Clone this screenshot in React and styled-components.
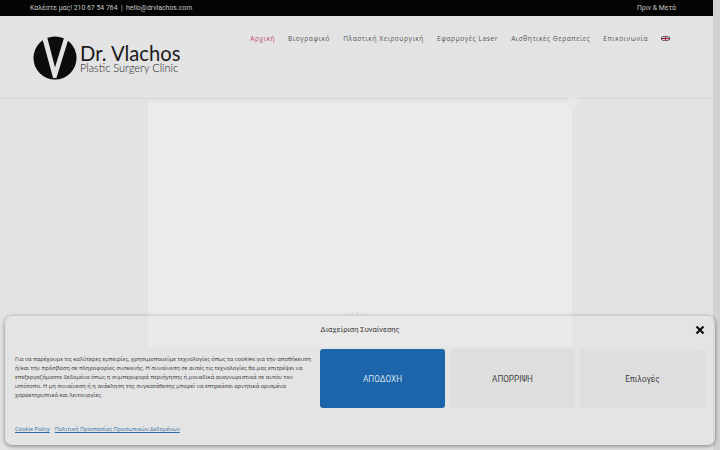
import React from 'react';
import styled, { createGlobalStyle } from 'styled-components';

const GlobalStyle = createGlobalStyle`
    html, body {
        margin: 0;
        padding: 0;
        height: 100%;
        overflow: hidden;
        background: #e3e3e3;
        font-family: 'Open Sans', 'Noto Sans', sans-serif;
    }
`;

const Screen = styled.div`
    position: relative;
    width: 720px;
    height: 450px;
    display: flex;
    overflow: hidden;
`;

const Page = styled.div`
    flex: 1;
    display: flex;
    flex-direction: column;
`;

const Scrollbar = styled.div`
    width: 7px;
    background: #d2d2d2;
`;

const TopBar = styled.div`
    height: 16px;
    flex: none;
    background: #050505;
    color: #c4c4c4;
    font-family: 'Roboto', sans-serif;
    font-size: 6.9px;
    display: flex;
    align-items: center;
    justify-content: space-between;
    padding: 0 37px 0 30px;
`;

const Header = styled.header`
    height: 83px;
    flex: none;
    box-sizing: border-box;
    border-bottom: 1px solid #d6d6d6;
    display: flex;
    justify-content: space-between;
    padding: 0 43px 0 33px;
`;

const Logo = styled.div`
    display: flex;
    align-items: center;
    gap: 3px;
    height: 66px;
    margin-top: 9px;
`;

const LogoText = styled.div`
    display: flex;
    flex-direction: column;
    color: #1a1a1a;
    font-family: 'Lato', sans-serif;
    padding-top: 3px;
`;

const LogoName = styled.div`
    font-size: 20.2px;
    line-height: 17px;
`;

const LogoSub = styled.div`
    font-size: 11px;
    line-height: 12px;
    font-weight: 300;
    color: #222;
`;

const Nav = styled.nav`
    display: flex;
    align-items: center;
    gap: 13px;
    height: 12px;
    margin-top: 16px;
`;

const NavItem = styled.a`
    font-size: 6.6px;
    letter-spacing: 0.58px;
    white-space: nowrap;
    color: ${(p) => (p.$active ? '#c2476d' : '#555')};
`;

const Lightbox = styled.div`
    position: absolute;
    left: 148px;
    top: 102px;
    width: 424px;
    height: 245px;
    background: #ebebeb;
`;

const LightboxClose = styled.div`
    position: absolute;
    right: -6px;
    top: -5px;
    width: 12px;
    height: 12px;
    border-radius: 50%;
    background: #e8e8e8;
`;

const Spinner = styled.div`
    position: absolute;
    left: 197px;
    top: 210px;
    width: 24px;
    height: 4px;
    box-sizing: border-box;
    border-top: 2px dotted #dedede;
    border-radius: 50% 50% 0 0 / 100% 100% 0 0;
`;

const Banner = styled.section`
    position: absolute;
    left: 5px;
    top: 316px;
    width: 710px;
    height: 129px;
    box-sizing: border-box;
    background: rgba(229, 229, 229, 0.35);
    border-radius: 7px;
    box-shadow: 0 1px 4px rgba(0, 0, 0, 0.45);
    padding: 7px 10px 0;
    display: grid;
    grid-template-columns: 300px 125px 125px 125px;
    grid-template-rows: 14px 59px auto;
    column-gap: 5px;
    row-gap: 12px;
    font-family: 'Roboto', sans-serif;
`;

const BannerTitle = styled.div`
    grid-column: 1 / -1;
    justify-self: center;
    font-size: 7.6px;
    line-height: 14px;
    color: #3a3a3a;
`;

const CloseButton = styled.div`
    position: absolute;
    right: 10px;
    top: 9px;
    display: flex;
`;

const BannerText = styled.p`
    margin: 0;
    max-width: 297px;
    font-family: 'Open Sans', sans-serif;
    font-size: 5.75px;
    line-height: 9px;
    color: #333;
    padding-top: 6px;
`;

const Button = styled.div`
    border-radius: 3px;
    display: flex;
    align-items: center;
    justify-content: center;
    font-size: 8.2px;
    background: ${(p) => (p.$primary ? '#1c65ab' : '#dedede')};
    color: ${(p) => (p.$primary ? '#d5e2ee' : '#444')};
`;

const Links = styled.div`
    grid-column: 1 / -1;
    display: flex;
    gap: 5px;
    margin-top: 5px;
`;

const PolicyLink = styled.a`
    font-family: 'Open Sans', sans-serif;
    font-size: 5.7px;
    color: #2f6da6;
    text-decoration: underline;
`;

const navItems = ['Αρχική', 'Βιογραφικό', 'Πλαστική Χειρουργική', 'Εφαρμογές Laser', 'Αισθητικές Θεραπείες', 'Επικοινωνία'];

const LogoMark = () => (
    <svg width="44" height="44" viewBox="0 0 46 46">
        <circle cx="23" cy="23" r="22.5" fill="#0c0c0c" />
        <path d="M9 0 L14.5 0 L23 33 L33 0 L38 0 L24.5 44 L21 44 Z" fill="#e3e3e3" />
    </svg>
);

const Flag = () => (
    <svg width="9" height="5" viewBox="0 0 18 10">
        <rect width="18" height="10" fill="#3c3b6e" />
        <path d="M0 0 L18 10 M18 0 L0 10" stroke="#eee" strokeWidth="2" />
        <path d="M9 0 V10 M0 5 H18" stroke="#eee" strokeWidth="3.4" />
        <path d="M9 0 V10 M0 5 H18" stroke="#b22234" strokeWidth="2" />
    </svg>
);

const App = () => (
    <Screen>
        <GlobalStyle />
        <Page>
            <TopBar>
                <span>Καλέστε μας! 210 67 54 764 &nbsp;|&nbsp; hello@drvlachos.com</span>
                <span>Πριν &amp; Μετά</span>
            </TopBar>
            <Header>
                <Logo>
                    <LogoMark />
                    <LogoText>
                        <LogoName>Dr. Vlachos</LogoName>
                        <LogoSub>Plastic Surgery Clinic</LogoSub>
                    </LogoText>
                </Logo>
                <Nav>
                    {navItems.map((item, i) => (
                        <NavItem key={item} $active={i === 0}>{item}</NavItem>
                    ))}
                    <Flag />
                </Nav>
            </Header>
        </Page>
        <Scrollbar />
        <Lightbox>
            <LightboxClose />
            <Spinner />
        </Lightbox>
        <Banner>
            <BannerTitle>Διαχείριση Συναίνεσης</BannerTitle>
            <CloseButton>
                <svg width="10" height="10" viewBox="0 0 10 10">
                    <path d="M1.5 1.5 L8.5 8.5 M8.5 1.5 L1.5 8.5" stroke="#111" strokeWidth="2.2" />
                </svg>
            </CloseButton>
            <BannerText>
                Για να παρέχουμε τις καλύτερες εμπειρίες, χρησιμοποιούμε τεχνολογίες όπως τα cookies για την αποθήκευση ή/και την πρόσβαση σε πληροφορίες συσκευής. Η συναίνεση σε αυτές τις τεχνολογίες θα μας επιτρέψει να επεξεργαζόμαστε δεδομένα όπως η συμπεριφορά περιήγησης ή μοναδικά αναγνωριστικά σε αυτόν τον ιστότοπο. Η μη συναίνεση ή η ανάκληση της συγκατάθεσης μπορεί να επηρεάσει αρνητικά ορισμένα χαρακτηριστικά και λειτουργίες.
            </BannerText>
            <Button $primary>ΑΠΟΔΟΧΗ</Button>
            <Button>ΑΠΟΡΡΙΨΗ</Button>
            <Button>Επιλογές</Button>
            <Links>
                <PolicyLink>Cookie Policy</PolicyLink>
                <PolicyLink>Πολιτική Προστασίας Προσωπικών Δεδομένων</PolicyLink>
            </Links>
        </Banner>
    </Screen>
);

export default App;
